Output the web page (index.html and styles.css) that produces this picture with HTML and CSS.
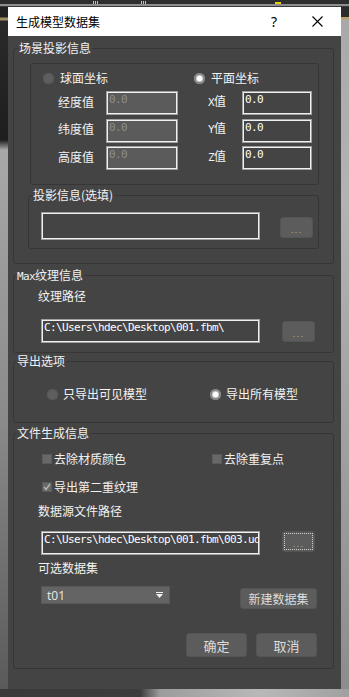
FILE: index.html
```html
<!DOCTYPE html>
<html lang="zh-CN">
<head>
<meta charset="utf-8">
<title>生成模型数据集</title>
<link rel="stylesheet" href="styles.css">
</head>
<body>
<div class="topbar"><span class="tick t1"></span><span class="tick t2"></span><span class="tick t3"></span></div>
<div class="dialog">
  <div class="titlebar">
    <span class="title">生成模型数据集</span>
    <span class="help">?</span>
    <svg class="close" width="11" height="11" viewBox="0 0 11 11"><path d="M0.5 0.5 L10.5 10.5 M10.5 0.5 L0.5 10.5" stroke="#000" stroke-width="1.1" fill="none"/></svg>
  </div>
  <div class="dlg-body">
    <fieldset class="group g1">
      <legend class="lg-g1">场景投影信息</legend>
      <div class="coord-frame">
        <div class="radio-row">
          <label class="radio r-sph"><span class="rdot"></span>球面坐标</label>
          <label class="radio"><span class="rdot on"></span>平面坐标</label>
        </div>
        <div class="coord-grid">
          <span class="lbl">经度值</span><div class="tb dis">0.0</div><span class="lbl lbl-r"><span class="mono">X</span>值</span><div class="tb">0.0</div>
          <span class="lbl">纬度值</span><div class="tb dis">0.0</div><span class="lbl lbl-r"><span class="mono">Y</span>值</span><div class="tb">0.0</div>
          <span class="lbl">高度值</span><div class="tb dis">0.0</div><span class="lbl lbl-r"><span class="mono">Z</span>值</span><div class="tb">0.0</div>
        </div>
      </div>
      <fieldset class="group sub">
        <legend class="lg-sub">投影信息(选填)</legend>
        <div class="path-row pr-sub">
          <div class="tb wide tall"></div>
          <button class="btn dots b-sub">...</button>
        </div>
      </fieldset>
    </fieldset>

    <fieldset class="group g2">
      <legend><span class="mono">Max</span>纹理信息</legend>
      <div class="field-lbl fl-tex">纹理路径</div>
      <div class="path-row pr-tex">
        <div class="tb wide">C:\Users\hdec\Desktop\001.fbm\</div>
        <button class="btn dots b-tex">...</button>
      </div>
    </fieldset>

    <fieldset class="group g3">
      <legend>导出选项</legend>
      <div class="radio-row rr-exp">
        <label class="radio r-vis"><span class="rdot"></span>只导出可见模型</label>
        <label class="radio"><span class="rdot on"></span>导出所有模型</label>
      </div>
    </fieldset>

    <fieldset class="group g4">
      <legend>文件生成信息</legend>
      <div class="cb-row cb1">
        <label class="cb c-mat"><span class="box"></span>去除材质颜色</label>
        <label class="cb"><span class="box"></span>去除重复点</label>
      </div>
      <div class="cb-row cb2">
        <label class="cb"><span class="box"><svg width="8" height="8" viewBox="0 0 8 8"><path d="M1 4 L3 6.5 L7 1" stroke="#b4b4b4" stroke-width="1.4" fill="none"/></svg></span>导出第二重纹理</label>
      </div>
      <div class="field-lbl fl-src">数据源文件路径</div>
      <div class="path-row pr-src">
        <div class="tb wide">C:\Users\hdec\Desktop\001.fbm\003.ud</div>
        <button class="btn dots b-src">...</button>
      </div>
      <div class="field-lbl fl-set">可选数据集</div>
      <div class="set-row">
        <div class="combo"><span>t01</span><svg width="7" height="6" viewBox="0 0 7 6"><rect x="0" y="0" width="7" height="1" fill="#f0f0f0"/><path d="M0 2 L7 2 L3.5 6 Z" fill="#f0f0f0"/></svg></div>
        <button class="btn b-new">新建数据集</button>
      </div>
      <div class="ok-row">
        <button class="btn b-ok">确定</button>
        <button class="btn b-ok">取消</button>
      </div>
    </fieldset>
  </div>
</div>
</body>
</html>
```
FILE: styles.css
```css
* { box-sizing: border-box; }
html, body { margin: 0; height: 697px; overflow: hidden; }
body {
  font-family: "Noto Sans CJK SC", "Noto Sans", sans-serif;
  font-size: 12px;
  color: #f2f2f2;
  background:
    linear-gradient(to right, #3a3a3a 0, #3c3c3c 140px, #9c9c9c 160px, #b8b8b8 260px, #a0a0a0 100%) left bottom / 100% 8px no-repeat,
    linear-gradient(to bottom, #2b2b2b 0, #2b2b2b 17px, #b8a46a 17px, #b8a46a 19px, #a9a9a9 20px, #b3b3b3 200px, #8c8c8c 697px) right top / 8px 100% no-repeat,
    linear-gradient(to bottom, #222 0, #222 17px, #9c8f63 18px, #9c8f63 20px, #2a2a2a 21px, #1e1e1e 140px, #a8a8a8 150px, #8a8a8a 420px, #5a5a5a 689px) left top / 8px 100% no-repeat,
    #444;
}

.topbar {
  height: 7px;
  display: flex;
  background: linear-gradient(to bottom, #2e2e2e 0, #2e2e2e 4px, #8e8e8e 4px, #8e8e8e 6px, #3a3a3a 6px);
}
.tick {
  width: 6px;
  height: 3px;
  margin-top: 1px;
  background: repeating-linear-gradient(to right, #e6d200 0, #e6d200 1px, transparent 1px, transparent 2px);
}
.t1 { margin-left: 93px; }
.t2 { margin-left: 42px; }
.t3 { margin-left: 128px; height: 2px; background: #e6d200; margin-top: 2px; }

.dialog { width: 333px; margin-left: 8px; }
.titlebar {
  height: 29px;
  background: #fff;
  color: #000;
  display: flex;
  align-items: center;
  padding: 0 18px 0 8px;
}
.title { flex: 1; font-size: 12px; }
.help { font-family: "Noto Sans", sans-serif; font-size: 14px; margin-right: 35px; }
.close { display: block; }

.dlg-body {
  background: #444;
  height: 653px;
  padding: 0 0 0 5px;
  display: flow-root;
}

.group {
  margin: 0;
  padding: 0;
  border: 1px solid #363636;
  border-radius: 3px;
  min-width: 0;
  width: 321px;
}
.group legend {
  padding: 0 1px;
  margin-left: 2px;
  height: 16px;
  line-height: 16px;
  font-size: 12px;
  color: #f2f2f2;
}
.mono {
  font-family: "DejaVu Sans Mono", "Liberation Mono", monospace;
  font-size: 11px;
  letter-spacing: -0.62px;
}

.g1 { margin-top: 4px; padding-bottom: 14px; }
.g1 > .lg-g1 { margin-left: 4px; }

.coord-frame {
  margin: 7px 0 0 16px;
  width: 289px;
  height: 122px;
  border: 1px solid #363636;
  border-radius: 3px;
  padding: 6px 0 0 12px;
}
.radio-row { display: flex; height: 16px; align-items: center; }
.radio { display: flex; align-items: center; gap: 6px; line-height: 16px; }
.r-sph { width: 151px; }
.rdot {
  width: 11px;
  height: 11px;
  border-radius: 50%;
  background: #5e5e5e;
  box-shadow: inset 0 0 0 1px #585858;
  display: flex;
  align-items: center;
  justify-content: center;
}
.rdot.on { background: #7c7c7c; box-shadow: inset 0 0 0 1px #8a8a8a; }
.rdot.on::after {
  content: "";
  width: 5px;
  height: 5px;
  border-radius: 50%;
  background: #fff;
  box-shadow: 0 0 1px 1px #e0e0e0;
}

.coord-grid {
  margin: 5px 0 0 15px;
  display: grid;
  grid-template-columns: 48px 72px 64px 70px;
  grid-auto-rows: 24px;
  row-gap: 3.5px;
  align-items: center;
}
.lbl { line-height: 16px; margin-top: -3px; }
.lbl-r { padding-left: 30px; }

.tb {
  height: 24px;
  background: #444;
  border: 1px solid #a0a0a0;
  box-shadow: inset 0 0 0 1px #f0f0f0;
  color: #fff;
  font-family: "DejaVu Sans Mono", "Liberation Mono", monospace;
  font-size: 11px;
  letter-spacing: -0.62px;
  line-height: 14px;
  padding: 1px 0 0 2px;
  white-space: nowrap;
  overflow: hidden;
}
.tb.dis { background: #5b5b5b; color: #8e8e8e; }
.tb.wide { width: 219px; }
.tb.tall { height: 28px; }

.sub { margin: 2px 0 0 14px; width: 291px; padding-bottom: 8px; }
.sub > .lg-sub { margin-left: 3px; }

.path-row { display: flex; align-items: flex-start; }
.pr-sub { margin-top: 9px; padding-left: 12px; }

.btn {
  font-family: "Noto Sans CJK SC", "Noto Sans", sans-serif;
  font-size: 12px;
  color: #dcdcdc;
  background: #5c5c5c;
  border: 1px solid #545454;
  border-radius: 3px;
  padding: 0;
  margin: 0;
  height: 21px;
}
.btn.dots {
  width: 33px;
  font-family: "DejaVu Sans", sans-serif;
  font-size: 9px;
  letter-spacing: 1px;
  color: #a8a8a8;
  padding-top: 5px;
}
.b-sub { margin: 5px 0 0 20px; }
.b-tex { margin: 2px 0 0 22px; }
.b-src { margin: 0 0 0 22px; outline: 1px dotted #cfcfcf; outline-offset: -3px; }

.g2 { margin-top: 3px; padding-bottom: 9px; }
.field-lbl { line-height: 16px; height: 16px; }
.fl-tex { margin: 5px 0 0 24px; }
.pr-tex { margin-top: 15px; padding-left: 27px; }

.g3 { padding-bottom: 20px; }
.rr-exp { margin-top: 17px; padding-left: 33px; }
.rr-exp .radio { gap: 5px; }
.r-vis { width: 163px; }

.g4 { margin-top: 2px; padding-bottom: 11px; }
.cb-row { display: flex; height: 16px; align-items: center; padding-left: 28px; }
.cb1 { margin-top: 10px; }
.cb2 { margin-top: 12px; }
.cb { display: flex; align-items: center; gap: 2px; line-height: 16px; }
.c-mat { width: 170px; }
.box {
  width: 10px;
  height: 10px;
  background: #686868;
  border: 1px solid #5a5a5a;
  display: flex;
  align-items: center;
  justify-content: center;
}
.box svg { display: block; }
.fl-src { margin: 8px 0 0 24px; }
.pr-src { margin-top: 12px; padding-left: 27px; }
.fl-set { margin: 5px 0 0 24px; }

.set-row { display: flex; align-items: flex-start; margin-top: 10px; padding-left: 27px; }
.combo {
  width: 129px;
  height: 18px;
  background: #646464;
  border: 1px solid #575757;
  display: flex;
  align-items: center;
  justify-content: space-between;
  padding: 0 6px 0 5px;
  color: #e2e2e2;
  font-family: "Noto Sans", sans-serif;
  font-size: 12px;
}
.combo svg { display: block; }
.b-new { width: 77px; margin: 2px 0 0 70px; }

.ok-row { display: flex; justify-content: flex-end; gap: 9px; margin-top: 24px; padding-right: 16px; }
.b-ok { width: 61px; height: 24px; font-size: 13px; }
```
